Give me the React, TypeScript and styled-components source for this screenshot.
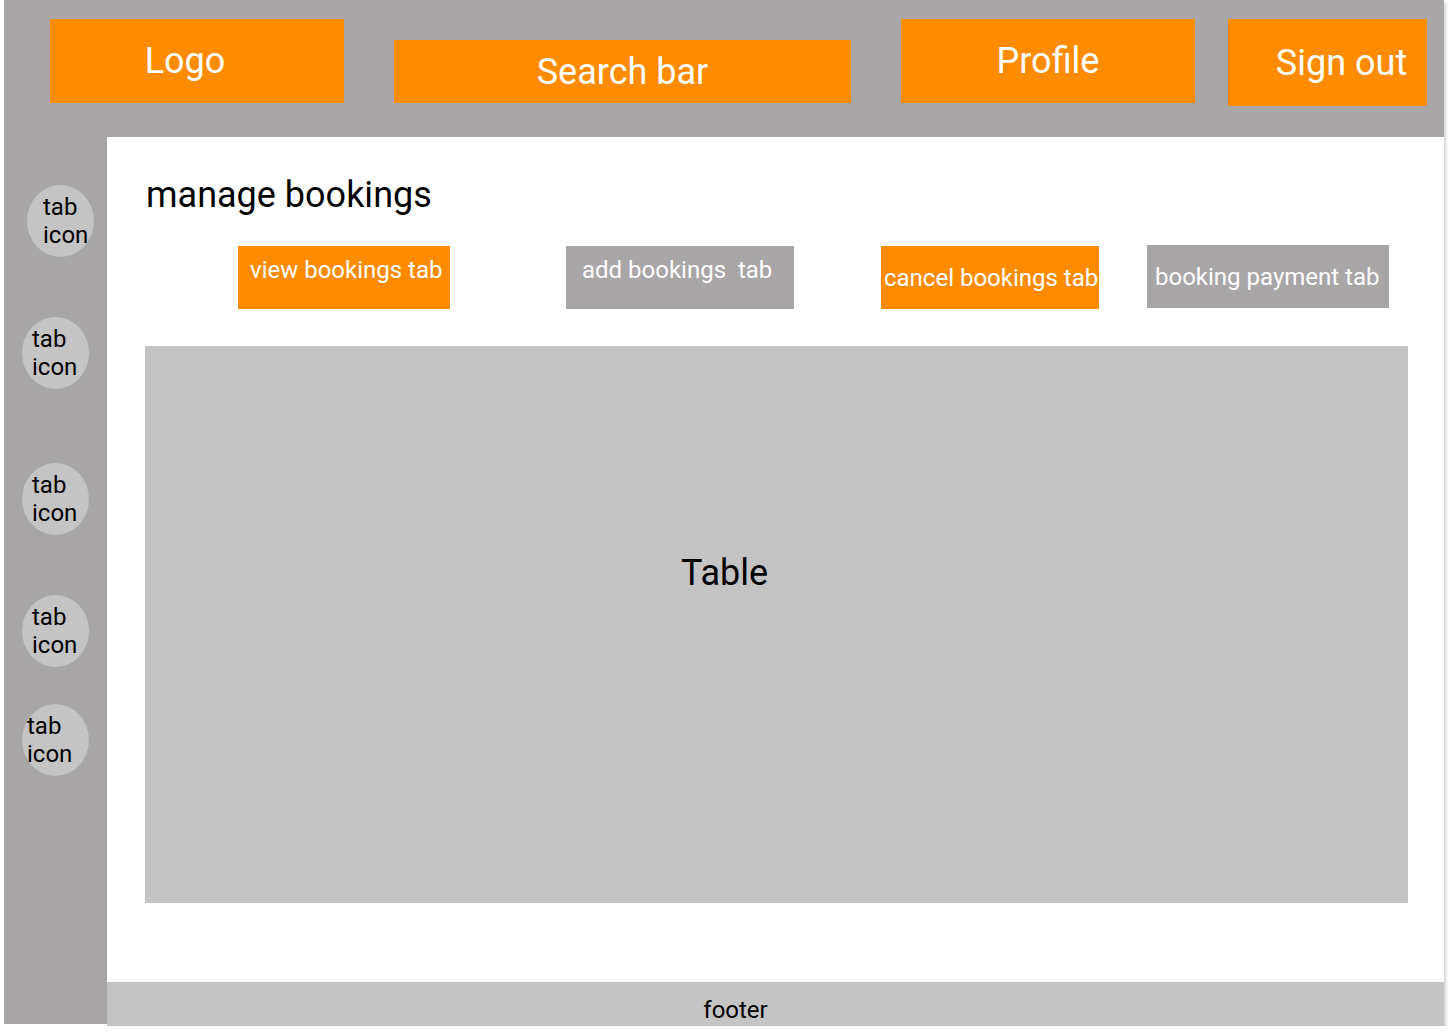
import React from "react";
import styled, { createGlobalStyle } from "styled-components";

const Global = createGlobalStyle`
  html, body { margin: 0; padding: 0; background: #ffffff; }
  body { font-family: Roboto, "Liberation Sans", Arial, sans-serif; }
  * { box-sizing: border-box; }
`;

const ORANGE = "#ff8c00";
const DARK = "#a8a6a7";
const LIGHT = "#c4c4c4";

const Frame = styled.div`
  margin-left: 4px;
  width: 1440px;
  height: 1026px;
  display: grid;
  grid-template-columns: 104px 1fr;
  grid-template-rows: 137px 1fr 44px;
  background: #fff;
  box-shadow: 2px 3px 3px rgba(0, 0, 0, 0.18);
`;

const Header = styled.header`
  grid-column: 1 / 3;
  background: ${DARK};
  display: flex;
  align-items: flex-start;
  padding-left: 46px;
`;

const HeaderBox = styled.div<{ $gap: number; $top: number; $w: number; $h: number; $shift?: number }>`
  margin-left: ${(p) => p.$gap}px;
  margin-top: ${(p) => p.$top}px;
  width: ${(p) => p.$w}px;
  height: ${(p) => p.$h}px;
  background: ${ORANGE};
  color: #fff;
  font-size: 36px;
  display: flex;
  align-items: center;
  justify-content: center;
  padding-left: ${(p) => ((p.$shift ?? 0) > 0 ? (p.$shift ?? 0) * 2 : 0)}px;
  padding-right: ${(p) => ((p.$shift ?? 0) < 0 ? -(p.$shift ?? 0) * 2 : 0)}px;
  &:first-child { margin-left: 0; }
`;

const Sidebar = styled.nav`
  grid-column: 1;
  grid-row: 2 / 4;
  background: ${DARK};
  display: flex;
  flex-direction: column;
  align-items: flex-start;
  margin-bottom: 2px;
  width: 103px;
`;

const TabIcon = styled.div<{ $top: number; $left: number; $pad: number }>`
  margin-top: ${(p) => p.$top}px;
  margin-left: ${(p) => p.$left}px;
  width: 67px;
  height: 72px;
  border-radius: 50%;
  background: ${LIGHT};
  display: flex;
  flex-direction: column;
  justify-content: center;
  padding-left: ${(p) => p.$pad}px;
  font-size: 24px;
  line-height: 28px;
  color: #000;
  white-space: nowrap;
`;

const Main = styled.main`
  grid-column: 2;
  grid-row: 2;
  padding: 37px 0 0 38px;
  display: flex;
  flex-direction: column;
  align-items: flex-start;
`;

const Title = styled.h1`
  margin: 0;
  font-weight: 400;
  font-size: 36px;
  line-height: 42px;
  color: #000;
`;

const TabRow = styled.div`
  display: flex;
  align-items: flex-start;
  margin-top: 30px;
`;

const Tab = styled.div<{
  $bg: string;
  $gap: number;
  $w: number;
  $top?: number;
  $center?: boolean;
  $padL: number;
  $padT?: number;
}>`
  margin-left: ${(p) => p.$gap}px;
  margin-top: ${(p) => p.$top ?? 0}px;
  width: ${(p) => p.$w}px;
  height: 63px;
  background: ${(p) => p.$bg};
  color: #fff;
  font-size: 24px;
  line-height: 28px;
  display: flex;
  align-items: ${(p) => (p.$center ? "center" : "flex-start")};
  padding-left: ${(p) => p.$padL}px;
  padding-top: ${(p) => p.$padT ?? 0}px;
  white-space: pre;
  overflow: hidden;
`;

const TableBox = styled.div`
  margin-top: 37px;
  margin-left: -1px;
  width: 1263px;
  height: 557px;
  background: ${LIGHT};
  display: flex;
  align-items: center;
  justify-content: center;
  font-size: 36px;
  color: #000;
  padding-bottom: 104px;
  padding-right: 104px;
`;

const Footer = styled.footer`
  grid-column: 2;
  grid-row: 3;
  margin-left: -1px;
  background: ${LIGHT};
  display: flex;
  align-items: center;
  justify-content: center;
  font-size: 24px;
  color: #000;
  padding-top: 12px;
  padding-right: 80px;
`;

const icons = [
  { top: 48, left: 23, pad: 16 },
  { top: 60, left: 18, pad: 10 },
  { top: 74, left: 18, pad: 10 },
  { top: 60, left: 18, pad: 10 },
  { top: 37, left: 18, pad: 5 },
];

export default function App() {
  return (
    <>
      <Global />
      <Frame>
        <Header>
          <HeaderBox $gap={0} $top={19} $w={294} $h={84} $shift={-12}>Logo</HeaderBox>
          <HeaderBox $gap={50} $top={40} $w={457} $h={63}>Search bar</HeaderBox>
          <HeaderBox $gap={50} $top={19} $w={294} $h={84}>Profile</HeaderBox>
          <HeaderBox $gap={33} $top={19} $w={199} $h={87} $shift={14}>Sign out</HeaderBox>
        </Header>
        <Sidebar>
          {icons.map((ic, i) => (
            <TabIcon key={i} $top={ic.top} $left={ic.left} $pad={ic.pad}>
              <span>tab</span>
              <span>icon</span>
            </TabIcon>
          ))}
        </Sidebar>
        <Main>
          <Title>manage bookings</Title>
          <TabRow>
            <Tab $bg={ORANGE} $gap={92} $w={212} $padL={12} $padT={10}>view bookings tab</Tab>
            <Tab $bg={DARK} $gap={116} $w={228} $padL={16} $padT={10}>add bookings  tab</Tab>
            <Tab $bg={ORANGE} $gap={87} $w={218} $padL={3} $center>cancel bookings tab</Tab>
            <Tab $bg={DARK} $gap={48} $w={242} $padL={8} $top={-1} $center>booking payment tab</Tab>
          </TabRow>
          <TableBox>Table</TableBox>
        </Main>
        <Footer>footer</Footer>
      </Frame>
    </>
  );
}
